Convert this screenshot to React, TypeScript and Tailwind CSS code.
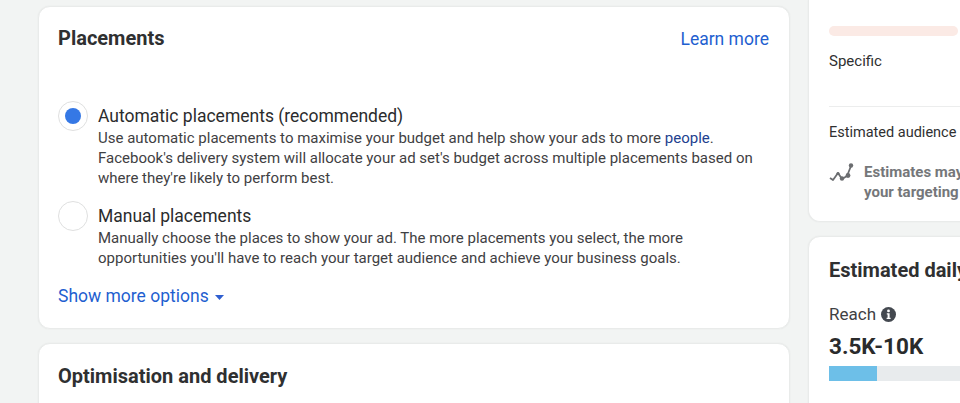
const cardClass = "bg-white rounded-[12px] border border-[#e9ebea] shadow-[0_0_2px_rgba(0,0,0,0.06)]";

function Radio({ checked }: { checked?: boolean }) {
  return (
    <div className="flex items-center justify-center w-[30px] h-[30px] rounded-full bg-white border-[1.5px] border-[#dfe0e0] shrink-0">
      {checked && <div className="w-[16px] h-[16px] rounded-full bg-[#3578e5]" />}
    </div>
  );
}

function PlacementOption({
  label,
  checked,
  children,
}: {
  label: string;
  checked?: boolean;
  children: React.ReactNode;
}) {
  return (
    <div className="flex gap-[10px]">
      <Radio checked={checked} />
      <div className="flex flex-col">
        <span className="text-[17.5px] leading-[23px] text-[#2b2c2d] mt-[4px]">{label}</span>
        <p className="text-[15px] leading-[20px] text-[#3f4143] whitespace-nowrap">{children}</p>
      </div>
    </div>
  );
}

function TrendIcon() {
  return (
    <svg width="25" height="20" viewBox="0 0 25 20" fill="none" className="shrink-0">
      <path d="M1 15 L4 17 L9 10 L13 16 L18 13 L22 3" stroke="#6b6d70" strokeWidth="1.8" strokeLinejoin="round" />
      <circle cx="9" cy="10.5" r="1.6" fill="#6b6d70" />
      <circle cx="13" cy="15.5" r="2.2" fill="#6b6d70" />
      <circle cx="19" cy="12.5" r="2.4" fill="#6b6d70" />
      <circle cx="22" cy="2.5" r="2.2" fill="#6b6d70" />
    </svg>
  );
}

function InfoIcon() {
  return (
    <svg width="15" height="15" viewBox="0 0 15 15" className="shrink-0">
      <circle cx="7.5" cy="7.5" r="7.5" fill="#444950" />
      <circle cx="7.5" cy="3.9" r="1.4" fill="#fff" />
      <path d="M5.8 6.2 H8.6 V10.8 H9.6 V12 H5.6 V10.8 H6.6 V7.4 H5.8 Z" fill="#fff" />
    </svg>
  );
}

export default function App() {
  return (
    <div
      className="flex items-start w-[960px] h-[403px] overflow-hidden bg-[#f2f4f3] pl-[38px] gap-[18px]"
      style={{ fontFamily: "Roboto, sans-serif" }}
    >
      {/* Left column */}
      <div className="flex flex-col w-[752px] shrink-0 pt-[6px] gap-[14px]">
        <section className={`${cardClass} h-[323px] pl-[19px] pr-[20px] pt-[19px]`}>
          <div className="flex items-center justify-between h-[26px]">
            <h2 className="text-[20px] font-bold text-[#2f3031] mb-[2px]">Placements</h2>
            <a className="text-[17.5px] text-[#1f5fd0]">Learn more</a>
          </div>
          <div className="flex flex-col gap-[13px] mt-[49px]">
            <PlacementOption label="Automatic placements (recommended)" checked>
              Use automatic placements to maximise your budget and help show your ads to more{" "}
              <a className="text-[#22418f]">people</a>.
              <br />
              Facebook's delivery system will allocate your ad set's budget across multiple placements based on
              <br />
              where they're likely to perform best.
            </PlacementOption>
            <PlacementOption label="Manual placements">
              Manually choose the places to show your ad. The more placements you select, the more
              <br />
              opportunities you'll have to reach your target audience and achieve your business goals.
            </PlacementOption>
          </div>
          <div className="flex items-center gap-[6px] mt-[16px] text-[17.5px] leading-[24px] text-[#1f5fd0]">
            <span>Show more options</span>
            <svg width="9" height="5" viewBox="0 0 9 5" className="mt-[2px]">
              <path d="M0 0 H9 L4.5 5 Z" fill="#2f5fd0" />
            </svg>
          </div>
        </section>
        <section className={`${cardClass} h-[100px] px-[19px] pt-[19px]`}>
          <h2 className="text-[20px] leading-[26px] font-bold text-[#2f3031]">Optimisation and delivery</h2>
        </section>
      </div>

      {/* Right column */}
      <div className="flex flex-col w-[400px] shrink-0 gap-[14px]">
        <section className={`${cardClass} h-[222px] rounded-t-none border-t-0 px-[20px] pt-[26px]`}>
          <div className="w-[129px] h-[10px] rounded-full bg-[#fbeae5]" />
          <p className="text-[15px] leading-[20px] text-[#2f3031] mt-[15px]">Specific</p>
          <div className="h-px bg-[#eceded] mt-[35px]" />
          <p className="text-[14.5px] leading-[20px] text-[#2f3031] mt-[16px] whitespace-nowrap">Estimated audience size</p>
          <div className="flex gap-[10px] mt-[19px] items-start">
            <div className="mt-[1px]">
              <TrendIcon />
            </div>
            <p className="text-[15px] leading-[20px] font-bold text-[#75777a] whitespace-nowrap">
              Estimates may vary over time
              <br />
              your targeting selections.
            </p>
          </div>
        </section>
        <section className={`${cardClass} h-[200px] px-[20px] pt-[21px]`}>
          <h2 className="text-[20px] leading-[24px] font-bold text-[#2f3031] whitespace-nowrap">Estimated daily results</h2>
          <div className="flex items-center gap-[5px] mt-[20px]">
            <span className="text-[17px] leading-[24px] text-[#3f4143]">Reach</span>
            <InfoIcon />
          </div>
          <p className="text-[22.5px] leading-[28px] font-bold text-[#2a2b2c] mt-[6px]">3.5K-10K</p>
          <div className="flex h-[15px] mt-[6px] bg-[#e8ebed]">
            <div className="w-[48px] bg-[#6dbfe8]" />
          </div>
        </section>
      </div>
    </div>
  );
}
